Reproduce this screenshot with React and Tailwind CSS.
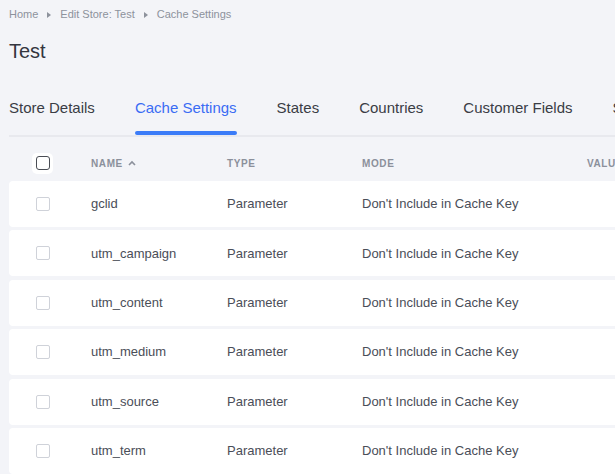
import React from "react";

const rows = [
  { name: "gclid", type: "Parameter", mode: "Don't Include in Cache Key" },
  { name: "utm_campaign", type: "Parameter", mode: "Don't Include in Cache Key" },
  { name: "utm_content", type: "Parameter", mode: "Don't Include in Cache Key" },
  { name: "utm_medium", type: "Parameter", mode: "Don't Include in Cache Key" },
  { name: "utm_source", type: "Parameter", mode: "Don't Include in Cache Key" },
  { name: "utm_term", type: "Parameter", mode: "Don't Include in Cache Key" },
];

const tabs = ["Store Details", "Cache Settings", "States", "Countries", "Customer Fields", "Shipping"];

const Caret = () => (
  <svg width="6" height="8" viewBox="0 0 6 8" className="mx-[8px] shrink-0">
    <path d="M1 1 L5 4 L1 7 Z" fill="#8d929c" />
  </svg>
);

const App = () => {
  return (
    <div className="w-[615px] h-[474px] overflow-hidden bg-[#f3f4f8] font-['Liberation_Sans',Arial,sans-serif]">
      <div className="pl-[9px]">
        {/* Breadcrumb */}
        <div className="flex items-center pt-[7px] h-[22px] text-[11px] text-[#8d929c] whitespace-nowrap">
          <span>Home</span>
          <Caret />
          <span>Edit Store: Test</span>
          <Caret />
          <span>Cache Settings</span>
        </div>

        {/* Title */}
        <h1 className="mt-[17px] text-[20px] leading-[24px] font-medium text-[#33363f]">Test</h1>

        {/* Tabs */}
        <div className="mt-[35px] flex border-b-2 border-[#e8e9ee] whitespace-nowrap">
          {tabs.map((t, i) => (
            <div
              key={t}
              className={`relative shrink-0 pb-[17px] text-[15px] leading-[20px] mr-[40px] ${
                i === 1 ? "text-[#3a6cf4]" : "text-[#3a3d45]"
              }`}
            >
              {t}
              {i === 1 && (
                <span className="absolute left-0 right-0 bottom-0 h-[4px] rounded-full bg-[#3b7cf8]" />
              )}
            </div>
          ))}
        </div>

        {/* Table header */}
        <div className="flex items-center h-[44px] pt-[8px] text-[10px] font-bold tracking-[0.06em] uppercase text-[#8b909b] whitespace-nowrap">
          <div className="w-[82px] shrink-0 pl-[23px]">
            <div className="w-[21px] h-[21px] bg-white rounded-[5px] flex items-center justify-center">
              <div className="w-[14px] h-[14px] rounded-[3px] border-[1.5px] border-[#4a4d55]" />
            </div>
          </div>
          <div className="w-[136px] shrink-0 flex items-center gap-[5px]">
            NAME
            <svg width="8" height="6" viewBox="0 0 8 6">
              <path d="M1 5 L4 2 L7 5" stroke="#8b909b" strokeWidth="1.6" fill="none" />
            </svg>
          </div>
          <div className="w-[135px] shrink-0">TYPE</div>
          <div className="w-[225px] shrink-0">MODE</div>
          <div className="shrink-0">VALUE</div>
        </div>

        {/* Rows */}
        <div className="flex flex-col gap-[3.4px]">
          {rows.map((r) => (
            <div
              key={r.name}
              className="flex items-center h-[46px] w-[640px] bg-white rounded-l-[4px] text-[13px] text-[#4a4e58] whitespace-nowrap"
            >
              <div className="w-[82px] shrink-0 pl-[27px]">
                <div className="w-[14px] h-[14px] rounded-[2px] border border-[#cfd2d9]" />
              </div>
              <div className="w-[136px] shrink-0">{r.name}</div>
              <div className="w-[135px] shrink-0">{r.type}</div>
              <div>{r.mode}</div>
            </div>
          ))}
        </div>
      </div>
    </div>
  );
};

export default App;
